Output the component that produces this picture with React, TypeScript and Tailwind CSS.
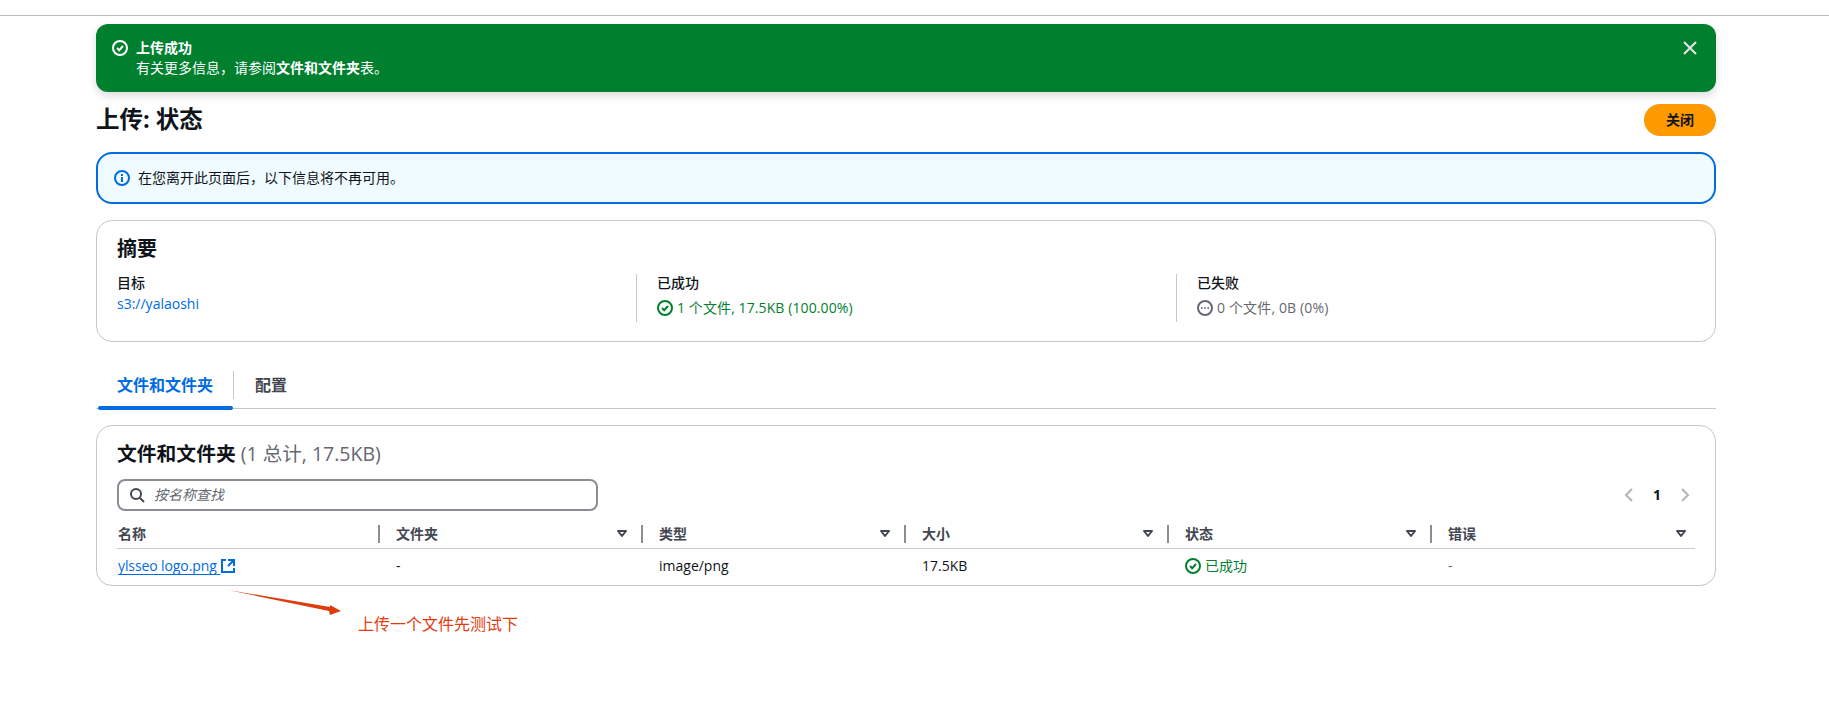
import React from "react";

const Check = ({ c }: { c: string }) => (
  <svg viewBox="0 0 16 16" className="w-4 h-4 shrink-0" fill="none" stroke={c} strokeWidth="2">
    <circle cx="8" cy="8" r="7" />
    <path d="M5 8l2.2 2.2L11 6" />
  </svg>
);

const Caret = () => (
  <svg viewBox="0 0 16 16" className="w-4 h-4 shrink-0" fill="none" stroke="#424650" strokeWidth="2" strokeLinejoin="round">
    <path d="M4 5h8l-4 5z" />
  </svg>
);

const columns = ["名称", "文件夹", "类型", "大小", "状态", "错误"];

function Head({ label, index }: { label: string; index: number }) {
  const last = index === columns.length - 1;
  return (
    <div className={`w-[263px] shrink-0 h-[18px] flex items-center ${index === 0 ? "pl-[1px]" : "pl-4"} ${last ? "pr-[6px]" : "pr-[11px] border-r-2 border-[#8c8c94]"}`}>
      <span className="font-bold text-[#424650] text-sm flex-1">{label}</span>
      {index > 0 && <Caret />}
    </div>
  );
}

export default function App() {
  return (
    <div className="relative min-h-[725px] bg-white text-sm text-[#0f141a] font-['Open_Sans','Noto_Sans_CJK_SC',sans-serif]">
      <div className="h-4 border-b border-[#bdbdbd]" />
      <div className="ml-[96px] w-[1620px]">
        <div className="mt-2 h-[68px] rounded-xl bg-[#00802f] text-white flex px-4 pt-[14px] shadow-[0_4px_8px_rgba(0,7,22,0.14)]">
          <div className="pt-0.5"><Check c="#ffffff" /></div>
          <div className="ml-2 flex-1 leading-5">
            <div className="font-bold">上传成功</div>
            <div>有关更多信息，请参阅<b>文件和文件夹</b>表。</div>
          </div>
          <svg viewBox="0 0 16 16" className="w-4 h-4 mt-0.5 mr-[2px]" fill="none" stroke="#e6e6e6" strokeWidth="2">
            <path d="M2 2l12 12M14 2L2 14" />
          </svg>
        </div>

        <div className="mt-3 h-8 flex items-center justify-between">
          <h1 className="text-[23.5px] font-bold">上传: 状态</h1>
          <button className="w-[72px] h-8 rounded-full bg-[#ff9900] font-bold text-sm">关闭</button>
        </div>

        <div className="mt-4 h-[52px] rounded-2xl border-2 border-[#006ce0] bg-[#f0fbff] flex items-center px-4 gap-2">
          <svg viewBox="0 0 16 16" className="w-4 h-4" fill="none" stroke="#006ce0" strokeWidth="2">
            <circle cx="8" cy="8" r="7" />
            <path d="M8 7v5M8 4v2" />
          </svg>
          <span>在您离开此页面后，以下信息将不再可用。</span>
        </div>

        <div className="mt-4 h-[122px] rounded-2xl border border-[#c6c6cd] pl-5 pt-4">
          <h2 className="text-xl font-bold leading-6">摘要</h2>
          <div className="flex mt-[13px]">
            <div className="w-[519px] leading-5">
              <div className="font-medium -mt-px">目标</div>
              <div className="text-[#006ce0] mt-px">s3://yalaoshi</div>
            </div>
            <div className="w-[540px] h-[48px] border-l border-[#c6c6cd] pl-5 leading-5">
              <div className="font-medium -mt-px">已成功</div>
              <div className="mt-[5px] flex items-center gap-1 text-[#00802f] tracking-[0.1px]"><Check c="#00802f" /><span>1 个文件, 17.5KB (100.00%)</span></div>
            </div>
            <div className="w-[535px] h-[48px] border-l border-[#c6c6cd] pl-5 leading-5">
              <div className="font-medium -mt-px">已失败</div>
              <div className="mt-[5px] flex items-center gap-1 text-[#656871] tracking-[0.15px]">
                <svg viewBox="0 0 16 16" className="w-4 h-4 shrink-0" fill="none" stroke="#656871" strokeWidth="2">
                  <circle cx="8" cy="8" r="7" />
                  <circle cx="4.8" cy="8" r="0.9" fill="#656871" stroke="none" />
                  <circle cx="8" cy="8" r="0.9" fill="#656871" stroke="none" />
                  <circle cx="11.2" cy="8" r="0.9" fill="#656871" stroke="none" />
                </svg>
                <span>0 个文件, 0B (0%)</span>
              </div>
            </div>
          </div>
        </div>

        <div className="mt-[29px] h-[38px] border-b border-[#c6c6cd] flex text-base font-bold relative">
          <div className="w-[137px] pl-[21px] pt-[2px] text-[#006ce0] leading-6 h-[38px] relative">
            文件和文件夹
            <div className="absolute left-[2px] right-0 bottom-[-1px] h-1 rounded-full bg-[#006ce0]" />
          </div>
          <div className="h-7 border-l border-[#c6c6cd] pl-[21px] pt-[2px] text-[#424650] leading-6">配置</div>
        </div>

        <div className="mt-4 h-[161px] rounded-2xl border border-[#c6c6cd] pl-5 pr-4 pt-4">
          <h2 className="text-[19.8px] leading-6 font-bold">文件和文件夹 <span className="font-normal text-[19.5px] text-[#656871]">(1 总计, 17.5KB)</span></h2>
          <div className="mt-[13px] h-8 flex items-center justify-between">
            <div className="w-[481px] h-8 rounded-lg border-2 border-[#8c8c94] flex items-center pl-[10px] gap-[9px]">
              <svg viewBox="0 0 16 16" className="w-4 h-4" fill="none" stroke="#424650" strokeWidth="2">
                <circle cx="7" cy="7" r="5" />
                <path d="M11 11l4 4" />
              </svg>
              <span className="italic text-[#656871]">按名称查找</span>
            </div>
            <div className="flex items-center pr-[6px]">
              <svg viewBox="0 0 16 16" className="w-4 h-4" fill="none" stroke="#b4b4bb" strokeWidth="2"><path d="M11 2L5 8l6 6" /></svg>
              <span className="font-bold w-[40px] text-center">1</span>
              <svg viewBox="0 0 16 16" className="w-4 h-4" fill="none" stroke="#b4b4bb" strokeWidth="2"><path d="M5 2l6 6-6 6" /></svg>
            </div>
          </div>
          <div className="mt-[14px] pb-[5px] w-[1578px] border-b border-[#c6c6cd] flex">
            {columns.map((c, i) => <Head key={c} label={c} index={i} />)}
          </div>
          <div className="flex pt-[7px] leading-5">
            <div className="w-[263px] pl-[1px] flex items-center">
              <span className="text-[#006ce0] underline underline-offset-[3px] tracking-[-0.1px]">ylsseo logo.png{"\u00a0"}</span>
              <svg viewBox="0 0 16 16" className="w-4 h-4" fill="none" stroke="#006ce0" strokeWidth="2">
                <path d="M14 8V2H8M14 2L8 8M6 2H2v12h12v-4" />
              </svg>
            </div>
            <div className="w-[263px] pl-4">-</div>
            <div className="w-[263px] pl-4">image/png</div>
            <div className="w-[263px] pl-4">17.5KB</div>
            <div className="w-[263px] pl-4 flex items-center gap-1 text-[#00802f]"><Check c="#00802f" /><span>已成功</span></div>
            <div className="w-[263px] pl-4 text-[#656871]">-</div>
          </div>
        </div>

        <div className="mt-[26px] ml-[262px] text-base leading-6 text-[#e23c12]">上传一个文件先测试下</div>
      </div>

      <svg className="absolute left-[225px] top-[586px]" width="120" height="32" viewBox="0 0 120 32">
        <path d="M3 4L105 21L105 19L116 25L105 29L104 25Z" fill="#dc3c10" />
      </svg>
    </div>
  );
}
